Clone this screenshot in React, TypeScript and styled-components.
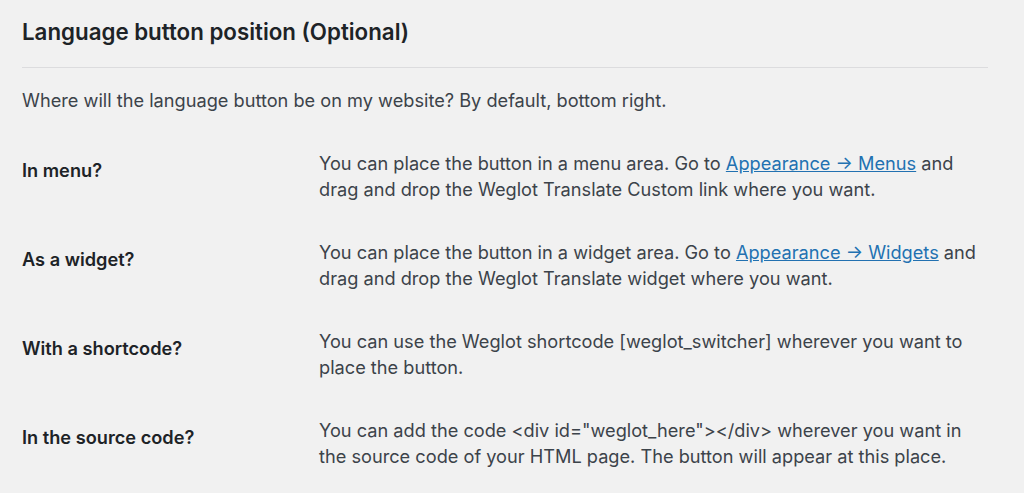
import type { ReactNode } from "react";
import styled, { createGlobalStyle } from "styled-components";

const GlobalStyle = createGlobalStyle`
  html, body {
    margin: 0;
    padding: 0;
    background: #f1f1f1;
  }
  body {
    font-family: Inter, "Liberation Sans", sans-serif;
    color: #3c434a;
  }
`;

const Section = styled.section`
  padding: 18px 18px 0 22px;
  width: 1006px;
  box-sizing: border-box;
`;

const Title = styled.h2`
  margin: 0;
  font-size: 22.3px;
  line-height: 28px;
  font-weight: 600;
  color: #1d2327;
`;

const Divider = styled.hr`
  border: 0;
  border-top: 1px solid #dcdcde;
  margin: 21px 0 0;
`;

const Intro = styled.p`
  margin: 19px 0 0;
  font-size: 18.2px;
  line-height: 26px;
`;

const Table = styled.div`
  margin-top: 26px;
  display: flex;
  flex-direction: column;
`;

const Row = styled.div`
  display: grid;
  grid-template-columns: 297px 660px;
  padding: 11px 0 26px;
`;

const Label = styled.div`
  font-size: 18.2px;
  line-height: 26px;
  font-weight: 600;
  color: #1d2327;
  padding-top: 7px;
`;

const Description = styled.div`
  font-size: 18.2px;
  line-height: 26px;
  color: #3c434a;
`;

const Link = styled.a`
  color: #2271b1;
  text-decoration: underline;
`;

interface PositionRow {
  label: string;
  text: ReactNode;
}

const rows: PositionRow[] = [
  {
    label: "In menu?",
    text: (
      <>
        You can place the button in a menu area. Go to{" "}
        <Link href="#">Appearance → Menus</Link> and drag and drop the Weglot
        Translate Custom link where you want.
      </>
    ),
  },
  {
    label: "As a widget?",
    text: (
      <>
        You can place the button in a widget area. Go to{" "}
        <Link href="#">Appearance → Widgets</Link> and drag and drop the
        Weglot Translate widget where you want.
      </>
    ),
  },
  {
    label: "With a shortcode?",
    text: (
      <>
        You can use the Weglot shortcode [weglot_switcher] wherever you want to
        place the button.
      </>
    ),
  },
  {
    label: "In the source code?",
    text: (
      <>
        You can add the code &lt;div id="weglot_here"&gt;&lt;/div&gt; wherever
        you want in the source code of your HTML page. The button will appear
        at this place.
      </>
    ),
  },
];

const App = () => {
  return (
    <>
      <GlobalStyle />
      <Section>
        <Title>Language button position (Optional)</Title>
        <Divider />
        <Intro>
          Where will the language button be on my website? By default, bottom
          right.
        </Intro>
        <Table>
          {rows.map((row) => (
            <Row key={row.label}>
              <Label>{row.label}</Label>
              <Description>{row.text}</Description>
            </Row>
          ))}
        </Table>
      </Section>
    </>
  );
};

export default App;
